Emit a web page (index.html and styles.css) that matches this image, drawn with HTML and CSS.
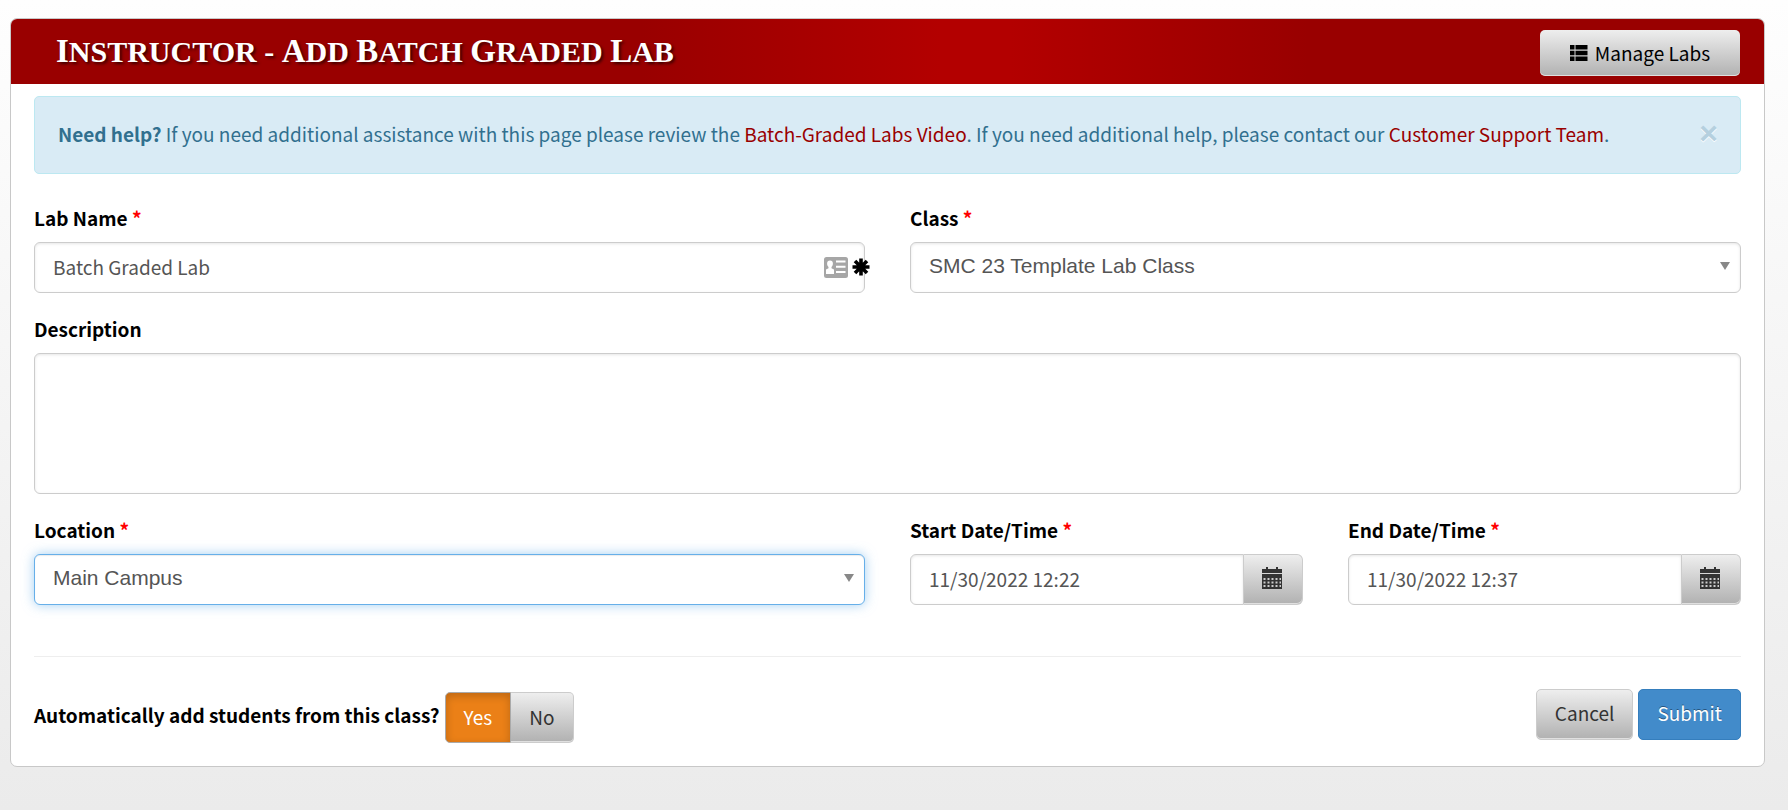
FILE: index.html
```html
<!DOCTYPE html>
<html lang="en">
<head>
  <meta charset="UTF-8" />
  <meta name="viewport" content="width=device-width, initial-scale=1" />
  <title>Instructor - Add Batch Graded Lab</title>
  <link rel="stylesheet" href="styles.css">
</head>
<body>
  <div class="panel">
    <div class="panel-heading">
      <h1><span>Instructor</span> - <span>Add</span> <span>Batch</span> <span>Graded</span> <span>Lab</span></h1>
      <button type="button" class="btn btn-manage">
        <svg width="18" height="16" viewBox="0 0 18 16" aria-hidden="true">
          <path d="M0 0h4.500v4.500H0zM5.500 0H17.500v4.500H5.500zM0 5.800h4.500v4.500H0zM5.500 5.800H17.500v4.500H5.500zM0 11.500h4.500V16H0zM5.500 11.500H17.500V16H5.500z"/>
        </svg>
        Manage Labs
      </button>
    </div>

    <form class="panel-body">
      <div class="alert">
        <p><strong>Need help?</strong> If you need additional assistance with this page please review the <a href="#">Batch-Graded Labs Video</a>. If you need additional help, please contact our <a href="#">Customer Support Team</a>.</p>
        <button type="button" class="close" aria-label="Close">&times;</button>
      </div>

      <div class="fields">
        <div class="field half">
          <label for="labName">Lab Name <span class="req">*</span></label>
          <div class="control">
            <input type="text" id="labName" class="input" value="Batch Graded Lab" />
            <svg class="card-icon" width="24" height="21" viewBox="0 0 24 21" aria-hidden="true">
              <rect width="24" height="21" rx="2.500" fill="#a6a6a6"/>
              <path fill="#fff" d="M6 3.500a2.900 3 0 0 1 2.900 3c0 1.500-.5 2.800-1.400 3.500v1.300l2.500 1.300v4.400H2v-4.400l2.500-1.300V10C3.600 9.300 3.100 8 3.100 6.500a2.900 3 0 0 1 2.900-3zM12 3.500h9.500v2H12zM12 8.700h9.500v2H12zM12 14h9.500v2H12z"/>
            </svg>
            <svg class="star-icon" width="18" height="18" viewBox="0 0 18 18" aria-hidden="true">
              <path stroke="#000" stroke-width="3.600" d="M9 .5v17M.5 9h17M3 3l12 12M15 3L3 15"/>
            </svg>
          </div>
        </div>
        <div class="field half">
          <label for="labClass">Class <span class="req">*</span></label>
          <div class="control select">
            <select id="labClass" class="input">
              <option>SMC 23 Template Lab Class</option>
            </select>
          </div>
        </div>

        <div class="field full">
          <label for="description">Description</label>
          <textarea id="description" class="input"></textarea>
        </div>

        <div class="field half">
          <label for="location">Location <span class="req">*</span></label>
          <div class="control select">
            <select id="location" class="input active">
              <option>Main Campus</option>
            </select>
          </div>
        </div>
        <div class="field">
          <label for="startDate">Start Date/Time <span class="req">*</span></label>
          <div class="input-group">
            <input type="text" id="startDate" class="input" value="11/30/2022 12:22" />
            <button type="button" class="btn btn-date" aria-label="Pick start date">
              <svg width="20" height="22" viewBox="0 0 20 22" aria-hidden="true">
                <path fill="#333" d="M4 0h2v2h8V0h2v2h4v4H0V2h4zM0 7h20v15H0z"/>
                <path stroke="#ccc" stroke-width="2" stroke-dasharray="2 2" d="M1.500 12h17.500M1.500 15.500h17.500M1.500 19h17.500"/>
              </svg>
            </button>
          </div>
        </div>
        <div class="field">
          <label for="endDate">End Date/Time <span class="req">*</span></label>
          <div class="input-group">
            <input type="text" id="endDate" class="input" value="11/30/2022 12:37" />
            <button type="button" class="btn btn-date" aria-label="Pick end date">
              <svg width="20" height="22" viewBox="0 0 20 22" aria-hidden="true">
                <path fill="#333" d="M4 0h2v2h8V0h2v2h4v4H0V2h4zM0 7h20v15H0z"/>
                <path stroke="#ccc" stroke-width="2" stroke-dasharray="2 2" d="M1.500 12h17.500M1.500 15.500h17.500M1.500 19h17.500"/>
              </svg>
            </button>
          </div>
        </div>
      </div>

      <hr />

      <div class="form-footer">
        <div class="auto-add" role="group" aria-labelledby="autoAddLabel">
          <span id="autoAddLabel" class="auto-label">Automatically add students from this class?</span>
          <div class="btn-group">
            <button type="button" class="btn btn-yes" aria-pressed="true">Yes</button>
            <button type="button" class="btn btn-no" aria-pressed="false">No</button>
          </div>
        </div>
        <div class="actions">
          <button type="button" class="btn">Cancel</button>
          <button type="submit" class="btn btn-primary">Submit</button>
        </div>
      </div>
    </form>
  </div>
</body>
</html>
```
FILE: styles.css
```css
* { box-sizing: border-box; }
html { min-height: 100%; }
body {
  margin: 0;
  padding: 18px 23px 40px 10px;
  min-height: 100vh;
  background: linear-gradient(#fefefe, #ebebeb);
  color: #000;
  font-family: "Noto Sans CJK SC", "Open Sans", sans-serif;
  font-size: 19px;
  line-height: 28px;
}
.panel {
  background: #fff;
  border: 1px solid #c8c8c8;
  border-radius: 7px;
}
.panel-heading {
  display: flex;
  align-items: center;
  justify-content: space-between;
  height: 65px;
  padding: 2px 24px 0 45px;
  border-radius: 6px 6px 0 0;
  background: linear-gradient(to right, #900 36%, #b30000 53%, #b30000 57%, #900 74%);
}
h1 {
  margin: 0;
  padding-bottom: 3px;
  color: #fff;
  font-family: "Liberation Serif", serif;
  font-size: 30px;
  line-height: 40px;
  font-weight: 700;
  text-transform: uppercase;
  text-shadow: 2px 2px 3px rgba(0, 0, 0, 0.6);
}
h1 span { display: inline-block; }
h1 span::first-letter { font-size: 33px; }
.panel-body { padding: 12px 23px 23px; }

/* buttons */
.btn {
  height: 51px;
  padding: 0 18px 4px;
  border: 1px solid #ccc;
  border-radius: 5px;
  background: linear-gradient(#eee, #b1b1b1);
  box-shadow: inset 0 -1px 0 rgba(255, 255, 255, 0.6);
  color: #333;
  font: inherit;
  cursor: pointer;
}
.btn-manage {
  display: flex;
  align-items: center;
  justify-content: center;
  gap: 7px;
  width: 200px;
  height: 46px;
  padding: 0;
  border: 0;
  color: #000;
}
.btn-primary {
  border-color: #357ebd;
  background: #428bca;
  box-shadow: none;
  color: #fff;
  text-shadow: 0 -1px 0 rgba(0, 0, 0, 0.4);
}
.btn-group .btn { padding-bottom: 2px; }
.btn-group .btn-yes {
  border-color: #aaa;
  border-radius: 5px 0 0 5px;
  background: #eb8017;
  box-shadow: inset 0 3px 8px rgba(0, 0, 0, 0.2);
  color: #fff;
}
.btn-group .btn-no {
  border-left: 0;
  border-radius: 0 5px 5px 0;
}

/* help message */
.alert {
  display: flex;
  align-items: center;
  justify-content: space-between;
  height: 78px;
  margin-bottom: 30px;
  padding: 0 22px 0 23px;
  border: 1px solid #bce8f1;
  border-radius: 5px;
  background: #d9ebf5;
  color: #31708f;
}
.alert p {
  margin: 0;
  padding-bottom: 2px;
}
.alert a {
  color: #900;
  text-decoration: none;
}
.close {
  padding: 0 0 5px;
  border: 0;
  background: none;
  color: #b5d0df;
  font-family: "Liberation Sans", Arial, sans-serif;
  font-size: 32px;
  font-weight: 700;
  line-height: 28px;
  text-shadow: 0 1px 0 #fff;
  cursor: pointer;
}

/* form fields */
.fields {
  display: grid;
  grid-template-columns: repeat(4, minmax(0, 1fr));
  gap: 22px 45px;
}
.half { grid-column: span 2; }
.full { grid-column: 1 / -1; }
.field label {
  display: block;
  margin-bottom: 10px;
  font-weight: 700;
}
.req { color: #f00; }
.control { position: relative; }
.input {
  display: block;
  width: 100%;
  height: 51px;
  padding: 0 18px 2px;
  border: 1px solid #ccc;
  border-radius: 6px;
  background: #fff;
  box-shadow: inset 0 1px 3px rgba(0, 0, 0, 0.1);
  color: #555;
  font: inherit;
}
.input.active {
  border-color: #66afe9;
  outline: none;
  box-shadow: inset 0 1px 1px rgba(0, 0, 0, 0.08), 0 0 12px rgba(102, 175, 233, 0.6);
}
textarea.input {
  height: 141px;
  padding: 10px 18px;
  resize: none;
}
select.input {
  appearance: none;
  padding-bottom: 3px;
  font-family: "Liberation Sans", Arial, sans-serif;
  font-size: 21px;
}
.select::after {
  content: "";
  position: absolute;
  top: 20px;
  right: 11px;
  border: 5px solid transparent;
  border-top: 8px solid #888;
  border-bottom: 0;
  pointer-events: none;
}
.card-icon {
  position: absolute;
  top: 15px;
  right: 17px;
}
.star-icon {
  position: absolute;
  top: 16px;
  right: -5px;
}
.input-group { display: flex; }
.input-group .input {
  flex: 1;
  min-width: 0;
  border-radius: 6px 0 0 6px;
}
.btn-date {
  display: flex;
  align-items: center;
  justify-content: center;
  width: 59px;
  padding: 0 2px 4px 0;
  border-left: 0;
  border-radius: 0 6px 6px 0;
}

/* footer */
hr {
  margin: 51px 0 32px;
  border: 0;
  border-top: 1px solid #eee;
}
.form-footer {
  display: flex;
  align-items: flex-start;
  justify-content: space-between;
}
.auto-add {
  display: flex;
  align-items: center;
  gap: 5px;
  padding-top: 3px;
}
.auto-label {
  padding-bottom: 6px;
  font-weight: 700;
}
.btn-group { display: flex; }
.actions {
  display: flex;
  gap: 5px;
}
```
